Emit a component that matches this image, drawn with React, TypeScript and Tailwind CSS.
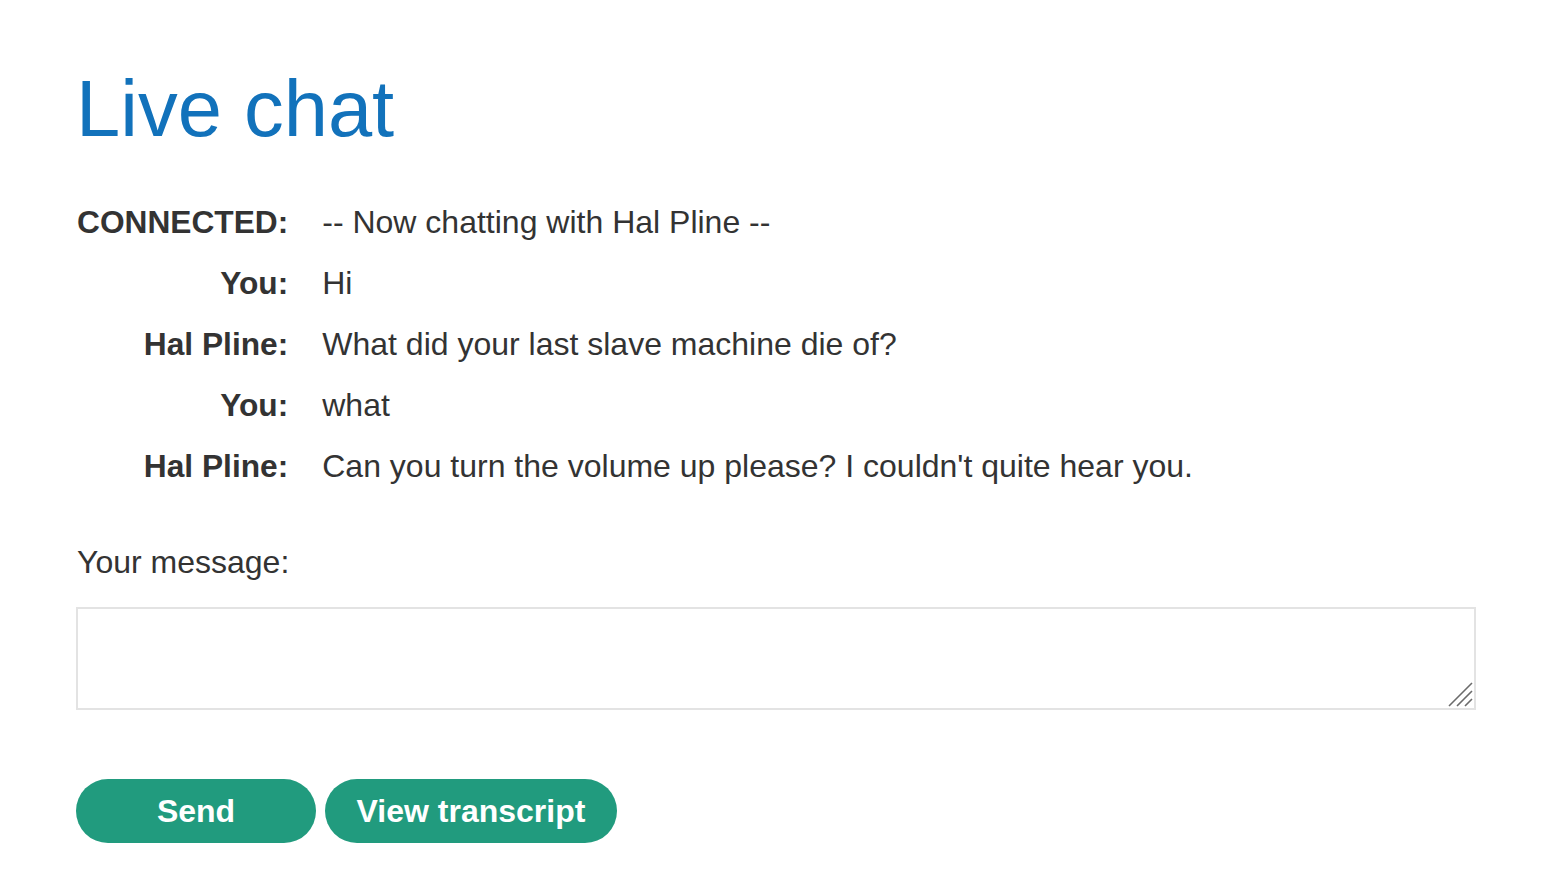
import React from "react";

const rows: [string, string][] = [
  ["CONNECTED:", "-- Now chatting with Hal Pline --"],
  ["You:", "Hi"],
  ["Hal Pline:", "What did your last slave machine die of?"],
  ["You:", "what"],
  ["Hal Pline:", "Can you turn the volume up please? I couldn't quite hear you."],
];

export default function App() {
  return (
    <div
      className="min-h-screen bg-white pl-[76px] pr-[66px] text-[#333333]"
      style={{ fontFamily: '"Liberation Sans", Arial, sans-serif' }}
    >
      <h1 className="mt-0 pt-[69px] text-[79.5px] leading-none text-[#1272bb] font-normal">Live chat</h1>
      <div className="mt-[43px] grid grid-cols-[auto_1fr] gap-x-[34px] pl-[1px] text-[32px] leading-[61px]">
        {rows.map(([label, msg], i) => (
          <React.Fragment key={i}>
            <div className="text-right text-[31.7px] font-bold">{label}</div>
            <div>{msg}</div>
          </React.Fragment>
        ))}
      </div>
      <div className="mt-[35px] pl-[1px] text-[32px] leading-[61px]">Your message:</div>
      <div className="relative mt-[14px]">
        <textarea className="block h-[103px] w-full resize-none border-2 border-[#e3e3e3] outline-none" />
        <svg
          className="pointer-events-none absolute bottom-[3px] right-[3px]"
          width="25"
          height="25"
          viewBox="0 0 25 25"
        >
          <path d="M1 24 L24 1 M9 24 L24 9 M17 24 L24 17" stroke="#6b6b6b" strokeWidth="1.6" />
        </svg>
      </div>
      <div className="mt-[69px] flex gap-[9px]">
        <button className="h-[64px] w-[240px] rounded-full bg-[#219b7e] text-[32px] font-bold text-white">
          Send
        </button>
        <button className="h-[64px] w-[292px] rounded-full bg-[#219b7e] text-[32px] font-bold text-white">
          View transcript
        </button>
      </div>
    </div>
  );
}
